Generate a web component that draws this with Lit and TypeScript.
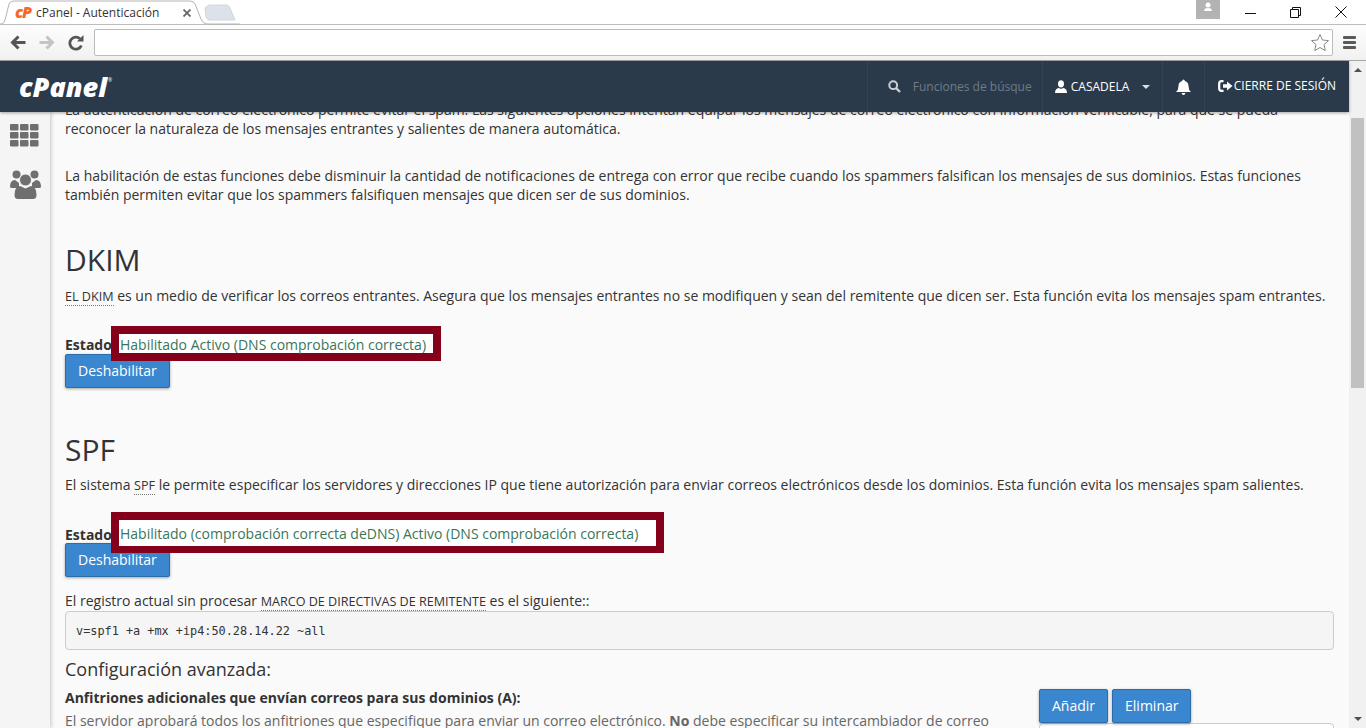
import { LitElement, html, css, svg } from "lit";
import { customElement } from "lit/decorators.js";

const cells = [0, 1, 2].flatMap((r) => [0, 1, 2].map((c) => ({ x: c * 10, y: r * 8 })));

@customElement("app-root")
export class AppRoot extends LitElement {
  static styles = css`
    :host { display: block; width: 1366px; height: 728px; overflow: hidden; font-family: "Open Sans", sans-serif; font-size: 14px; color: #333; background: #fff; }
    * { box-sizing: border-box; }
    .tabstrip { height: 24px; display: flex; justify-content: space-between; background: #fff; position: relative; }
    .tabs { position: relative; width: 240px; height: 25px; }
    .tabs svg { display: block; }
    .tabtitle { position: absolute; left: 36px; top: 5px; font-family: "Open Sans", sans-serif; font-size: 12px; color: #333; line-height: 16px; }
    .favicon { position: absolute; left: 15px; top: 4px; font: italic 800 16px/16px "Open Sans", sans-serif; color: #f4692a; letter-spacing: -1px; }
    .tabclose { position: absolute; left: 183px; top: 9px; }
    .winctl { display: flex; height: 20px; }
    .winuser { width: 24px; height: 19px; background: #b3b3b3; display: flex; justify-content: center; margin-right: 8px; }
    .winbtn { width: 45px; height: 24px; display: flex; align-items: center; justify-content: center; }
    .winbtn svg { display: block; }
    .winbtn.last { margin-right: 3px; }
    .toolbar { height: 37px; background: linear-gradient(#fdfdfd, #f1f1f1); border-top: 1px solid #bdbdbd; border-bottom: 1px solid #a5a5a5; display: flex; align-items: center; padding: 0 10px 0 10px; }
    .navicon { display: block; }
    .nav { display: flex; gap: 13px; width: 84px; align-items: center; }
    .omni { width: 1239px; height: 27px; margin-top: -1px; background: #fff; border: 1px solid #bbb; border-radius: 2px; display: flex; justify-content: flex-end; align-items: center; padding-right: 2px; }
    .menu { margin-left: 10px; display: flex; flex-direction: column; gap: 2px; width: 13px; }
    .menu i { display: block; height: 3px; background: #5a5a5a; border-radius: 1px; }
    .body { display: flex; height: 667px; }
    .page { width: 1349px; display: flex; flex-direction: column; height: 667px; }
    .scroll { width: 17px; background: #f1f1f1; display: flex; flex-direction: column; align-items: center; position: relative; }
    .arrow-up { width: 0; height: 0; border: 4px solid transparent; border-top: 0; border-bottom: 4px solid #505050; margin-top: 7px; }
    .thumb { width: 13px; height: 270px; background: #c1c1c1; margin-top: 46px; }
    .arrow-down { width: 0; height: 0; border: 4px solid transparent; border-bottom: 0; border-top: 4px solid #505050; margin-top: auto; margin-bottom: 7px; }
    header { height: 51px; background: #2a3a4a; display: flex; align-items: stretch; justify-content: space-between; position: relative; z-index: 3; color: #fff; box-shadow: 0 1px 3px rgba(0,0,0,.35); }
    .logo { margin: 8px 0 0 19px; font: italic 800 27px/36px "Open Sans", sans-serif; letter-spacing: 0; color: #fff; display: flex; }
    .logo sup { font-size: 5px; line-height: 8px; margin: 7px 0 0 1px; font-style: normal; font-weight: 400; letter-spacing: 0; }
    .hright { display: flex; font-size: 12px; align-items: stretch; padding-right: 13px; }
    .hitem { border-left: 1px solid #334353; display: flex; align-items: center; }
    .search { width: 175px; padding-left: 20px; gap: 12px; color: #6e7b88; }
    .search span { display: block; width: 119px; white-space: nowrap; overflow: hidden; }
    .user { width: 120px; padding-left: 12px; gap: 4px; font-weight: 400; }
    .caret { width: 0; height: 0; border: 4px solid transparent; border-bottom: 0; border-top: 4px solid #ddd; margin-left: 9px; }
    .bell { width: 42px; justify-content: center; padding-left: 1px; }
    .logout { padding-left: 13px; gap: 1px; }
    .logout span, .logout svg { position: relative; top: -1px; }
    .lower { display: flex; flex: 1; min-height: 0; }
    aside { width: 50px; background: #f5f5f5; box-shadow: 1px 0 4px rgba(0,0,0,.22); position: relative; z-index: 1; padding: 12px 0 0 10px; display: flex; flex-direction: column; gap: 23px; }
    aside svg { display: block; }
    main { flex: 1; background: #fafafa; padding: 0 15px; overflow: hidden; min-width: 0; }
    .content { margin-top: -12px; line-height: 19px; }
    p { margin: 0; }
    .p2 { margin-top: 28px; }
    h1 { font-weight: 400; font-size: 30px; line-height: 36px; margin: 0; color: #333; }
    .dkim { margin-top: 38px; }
    .desc { margin-top: 8px; }
    .desc.d2 { margin-top: 7px; }
    abbr { text-decoration: none; border-bottom: 1px dotted #777; font-size: 12.6px; }
    .status { margin-top: 29px; position: relative; height: 19px; }
    strong { font-weight: 700; }
    .mark { position: absolute; background: #fff; border: solid #85001a; border-width: 8px; color: #38765a; white-space: nowrap; z-index: 2; left: 46px; line-height: 19px; padding-left: 1px; }
    .mark1 { top: -9px; width: 330px; height: 35px; padding-top: 1px; }
    .mark2 { top: -13px; width: 553px; height: 41px; border-bottom-width: 7px; padding-top: 4px; }
    .btn { display: inline-block; background: #3a87cf; border: 1px solid #2c6ca8; border-radius: 2px; color: #fff; font: 14px/20px "Open Sans", sans-serif; padding: 6px 12px; box-shadow: 0 1px 3px rgba(0,0,0,.35); height: 34px; }
    .b2 { margin-top: -1px; }
    .spf { margin-top: 44px; }
    .status.s2 { margin-top: 30px; }
    .raw { margin-top: 14px; }
    pre { margin: 0; height: 39px; padding: 10px 10px 8px; background: #f5f5f5; border: 1px solid #ccc; border-radius: 4px; font: 11.85px/18px "DejaVu Sans Mono", monospace; color: #333; }
    h4 { margin: 9px 0 0; font-weight: 400; font-size: 18px; line-height: 20px; }
    .form { display: grid; grid-template-columns: 1fr 295px; column-gap: 15px; margin-top: 8px; }
    .form h5 { margin: 0; font-size: 14px; line-height: 19px; font-weight: 700; padding-top: 1px; }
    .form .help { margin-top: 4px; color: #666; }
    .actions { display: flex; gap: 4px; margin-top: 2px; }
    .input { height: 40px; background: #fff; border: 1px solid #ccc; border-radius: 4px; }
  `;

  render() {
    return html`
      <div class="tabstrip">
        <div class="tabs">
          <svg width="240" height="25" viewBox="0 0 240 25">
            <path d="M205 8 L209 5 H226 Q229 5 230 8 L235 20 H210 Q207 20 206 17 Z" fill="#dde1e9" stroke="#d2d6dc"/>
            <path d="M0 24 H1 Q4 24 5 20 L9 4 Q10 1 14 1 H190 Q194 1 195 4 L201 19 Q203 24 207 24 H240" fill="#fff" stroke="#b5b5b5"/>
          </svg>
          <span class="favicon">cP</span>
          <span class="tabtitle">cPanel - Autenticación</span>
          <svg class="tabclose" width="8" height="8" viewBox="0 0 8 8"><path d="M0.5 0.5 L7.5 7.5 M7.5 0.5 L0.5 7.5" stroke="#666" stroke-width="1.8"/></svg>
        </div>
        <div class="winctl">
          <div class="winuser">
            <svg width="10" height="11" viewBox="0 0 10 11"><circle cx="5" cy="5" r="2.5" fill="#fff"/><path d="M1 11 Q1 8 5 8 Q9 8 9 11 Z" fill="#fff"/></svg>
          </div>
          <div class="winbtn"><svg width="11" height="11"><path d="M0 6.5 H11" stroke="#111"/></svg></div>
          <div class="winbtn"><svg width="11" height="11"><path d="M0.5 2.5 H8.5 V10.5 H0.5 Z M2.5 2.5 V0.5 H10.5 V8.5 H8.5" fill="none" stroke="#111"/></svg></div>
          <div class="winbtn last"><svg width="12" height="12"><path d="M0.5 0.5 L11.5 11.5 M11.5 0.5 L0.5 11.5" stroke="#111"/></svg></div>
        </div>
      </div>
      <div class="toolbar">
        <div class="nav">
          <svg class="navicon" width="16" height="15" viewBox="0 0 16 15"><path d="M15.5 7.5 H3 M8.5 1.5 L2.5 7.5 L8.5 13.5" fill="none" stroke="#555" stroke-width="3"/></svg>
          <svg class="navicon" width="16" height="15" viewBox="0 0 16 15"><path d="M0.5 7.5 H13 M7.5 1.5 L13.5 7.5 L7.5 13.5" fill="none" stroke="#c4c4c4" stroke-width="3"/></svg>
          <svg class="navicon" width="16" height="16" viewBox="0 0 16 16"><path d="M13.4 10.5 A6 6 0 1 1 12 3.8" fill="none" stroke="#555" stroke-width="2.8"/><path d="M9 6.5 H15.5 V0 Z" fill="#555"/></svg>
        </div>
        <div class="omni">
          <svg width="20" height="19" viewBox="0 0 20 19"><path d="M10 1.5 L12.4 7 L18.5 7.6 L14 11.6 L15.3 17.6 L10 14.5 L4.7 17.6 L6 11.6 L1.5 7.6 L7.6 7 Z" fill="#fff" stroke="#8a8a8a"/></svg>
        </div>
        <div class="menu"><i></i><i></i><i></i></div>
      </div>
      <div class="body">
        <div class="page">
          <header>
            <div class="logo">cPanel<sup>®</sup></div>
            <div class="hright">
              <div class="hitem search">
                <svg width="13" height="13" viewBox="0 0 13 13"><circle cx="5.2" cy="5.2" r="3.9" fill="none" stroke="#c9ced3" stroke-width="2"/><path d="M8 8 L12 12" stroke="#c9ced3" stroke-width="2.4"/></svg>
                <span>Funciones de búsqueda</span>
              </div>
              <div class="hitem user">
                <svg width="12" height="13" viewBox="0 0 12 13"><ellipse cx="6" cy="3.8" rx="3" ry="3.6" fill="#fff"/><path d="M0 13 Q0 8.5 4 8 L6 9 L8 8 Q12 8.5 12 13 Z" fill="#fff"/></svg>
                <span>CASADELA</span><i class="caret"></i>
              </div>
              <div class="hitem bell">
                <svg width="15" height="16" viewBox="0 0 15 16"><path d="M7.5 0.5 Q8.8 0.5 8.8 2 Q12.5 3 12.5 7 Q12.5 11 15 13 H0 Q2.5 11 2.5 7 Q2.5 3 6.2 2 Q6.2 0.5 7.5 0.5 Z M5.5 14 H9.5 Q9 16 7.5 16 Q6 16 5.5 14 Z" fill="#fff"/></svg>
              </div>
              <div class="hitem logout">
                <svg width="15" height="12" viewBox="0 0 15 12"><path d="M5.5 1.2 H3.5 Q1.2 1.2 1.2 3.5 V8.5 Q1.2 10.8 3.5 10.8 H5.5" fill="none" stroke="#fff" stroke-width="2.2"/><path d="M5 4.3 H9 V1.5 L14.5 6 L9 10.5 V7.7 H5 Z" fill="#fff"/></svg>
                <span>CIERRE DE SESIÓN</span>
              </div>
            </div>
          </header>
          <div class="lower">
            <aside>
              <svg width="29" height="23" viewBox="0 0 29 23">
                ${cells.map((c) => svg`<rect x=${c.x} y=${c.y} width="8.5" height="6.5" rx="1" fill="#6f6f6f"/>`)}
              </svg>
              <svg width="31" height="29" viewBox="0 0 31 29">
                <circle cx="6.5" cy="4.5" r="4" fill="#6f6f6f"/><circle cx="24.5" cy="4.5" r="4" fill="#6f6f6f"/>
                <path d="M0 17 Q0 10 5 10 L9 13 V18 H2 Q0 18 0 17 Z M31 17 Q31 10 26 10 L22 13 V18 H29 Q31 18 31 17 Z" fill="#6f6f6f"/>
                <circle cx="15.5" cy="10" r="6" fill="#6f6f6f" stroke="#f5f5f5" stroke-width="1"/>
                <path d="M4.5 25 Q4.5 16.5 10 16 L15.5 18.5 L21 16 Q26.5 16.5 26.5 25 Q26.5 29 23 29 H8 Q4.5 29 4.5 25 Z" fill="#6f6f6f"/>
              </svg>
            </aside>
            <main>
              <div class="content">
                <p>La autenticación de correo electrónico permite evitar el spam. Las siguientes opciones intentan equipar los mensajes de correo electrónico con información verificable, para que se pueda reconocer la naturaleza de los mensajes entrantes y salientes de manera automática.</p>
                <p class="p2">La habilitación de estas funciones debe disminuir la cantidad de notificaciones de entrega con error que recibe cuando los spammers falsifican los mensajes de sus dominios. Estas funciones también permiten evitar que los spammers falsifiquen mensajes que dicen ser de sus dominios.</p>
                <h1 class="dkim">DKIM</h1>
                <p class="desc"><abbr>EL DKIM</abbr> es un medio de verificar los correos entrantes. Asegura que los mensajes entrantes no se modifiquen y sean del remitente que dicen ser. Esta función evita los mensajes spam entrantes.</p>
                <div class="status"><strong>Estado:</strong><span class="mark mark1">Habilitado Activo (DNS comprobación correcta)</span></div>
                <div class="btn">Deshabilitar</div>
                <h1 class="spf">SPF</h1>
                <p class="desc d2">El sistema <abbr>SPF</abbr> le permite especificar los servidores y direcciones IP que tiene autorización para enviar correos electrónicos desde los dominios. Esta función evita los mensajes spam salientes.</p>
                <div class="status s2"><strong>Estado:</strong><span class="mark mark2">Habilitado (comprobación correcta deDNS) Activo (DNS comprobación correcta)</span></div>
                <div class="btn b2">Deshabilitar</div>
                <p class="raw">El registro actual sin procesar <abbr>MARCO DE DIRECTIVAS DE REMITENTE</abbr> es el siguiente::</p>
                <pre>v=spf1 +a +mx +ip4:50.28.14.22 ~all</pre>
                <h4>Configuración avanzada:</h4>
                <div class="form">
                  <div>
                    <h5>Anfitriones adicionales que envían correos para sus dominios (A):</h5>
                    <p class="help">El servidor aprobará todos los anfitriones que especifique para enviar un correo electrónico. <strong>No</strong> debe especificar su intercambiador de correo</p>
                  </div>
                  <div>
                    <div class="actions"><span class="btn">Añadir</span><span class="btn">Eliminar</span></div>
                    <div class="input"></div>
                  </div>
                </div>
              </div>
            </main>
          </div>
        </div>
        <div class="scroll"><i class="arrow-up"></i><i class="thumb"></i><i class="arrow-down"></i></div>
      </div>
    `;
  }
}
